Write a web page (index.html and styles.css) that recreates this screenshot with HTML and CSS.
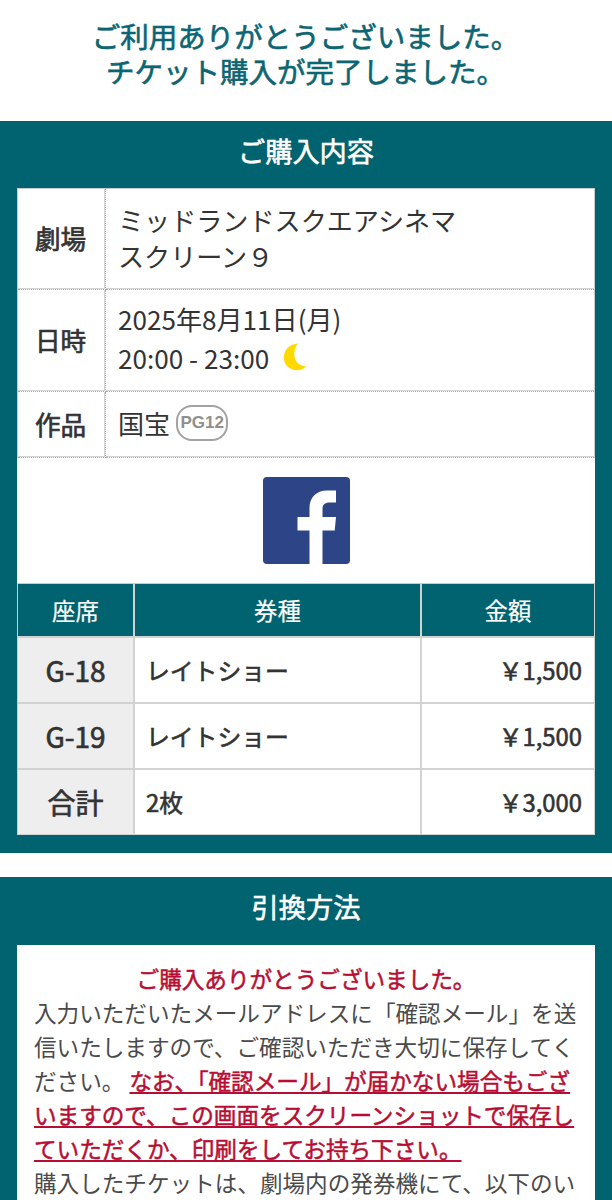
FILE: index.html
```html
<!DOCTYPE html>
<html lang="ja">
<head>
<meta charset="utf-8">
<title>チケット購入完了</title>
<link rel="stylesheet" href="styles.css">
</head>
<body>
<h1 class="thanks">ご利用ありがとうございました。<br>チケット購入が完了しました。</h1>
<section class="panel purchase">
  <h2 class="panel-title">ご購入内容</h2>
  <div class="panel-body">
    <table class="info">
      <tr class="theater"><th>劇場</th><td>ミッドランドスクエアシネマ<br>スクリーン９</td></tr>
      <tr class="date"><th>日時</th><td>2025年8月11日(月)<br>20:00 - 23:00<svg class="moon" viewBox="0 0 24 28"><path d="M15 .5C6.500 1 .8 7 .8 14.300c0 7.500 5.800 12.900 13 12.900 3.700 0 7.200-1.300 9.400-3.700C16 23 11.300 18 11.300 11.500 11.300 7 12.500 3.500 15 .5z"/></svg></td></tr>
      <tr class="title"><th>作品</th><td><div class="movie"><span>国宝</span><span class="rating">PG12</span></div></td></tr>
    </table>
    <div class="share">
      <svg class="facebook" viewBox="0 0 87 87"><rect width="87" height="87" rx="4" fill="#2d4486"/><path d="M46.500 87V53.500H34.500V40h12v-9C46.500 20 53.500 13.500 64 13.500h9v12h-6c-5.500 0-7.500 2-7.500 7V40H73L71.700 53.500h-12.200V87z" fill="#fff"/></svg>
    </div>
    <table class="seats">
      <tr class="head"><th>座席</th><th>券種</th><th>金額</th></tr>
      <tr><th>G-18</th><td>レイトショー</td><td class="price">￥1,500</td></tr>
      <tr><th>G-19</th><td>レイトショー</td><td class="price">￥1,500</td></tr>
      <tr><th>合計</th><td>2枚</td><td class="price">￥3,000</td></tr>
    </table>
  </div>
</section>
<section class="panel exchange">
  <h2 class="panel-title">引換方法</h2>
  <div class="panel-body note">
    <p class="lead">ご購入ありがとうございました。</p>
    <p>入力いただいたメールアドレスに「確認メール」を送<br>信いたしますので、ご確認いただき大切に保存してく<br>ださい。 <strong>なお、「確認メール」が届かない場合もござ<br>いますので、この画面をスクリーンショットで保存し<br>ていただくか、印刷をしてお持ち下さい。</strong><br>購入したチケットは、劇場内の発券機にて、以下のい</p>
  </div>
</section>
</body>
</html>
```
FILE: styles.css
```css
* { box-sizing: border-box; }
html { overflow: hidden; }
body {
  margin: 0;
  height: 1200px;
  overflow: hidden;
  background: #fff;
  color: #333;
  font-family: "Noto Sans CJK JP", sans-serif;
  font-weight: 400;
}
h1, h2, p { margin: 0; }
.thanks {
  height: 121px;
  padding: 18px 1px 0 0;
  color: #0c6572;
  font-size: 28.5px;
  font-weight: 400;
  line-height: 35px;
  text-align: center;
  -webkit-text-stroke: 0.6px;
}
.panel {
  padding: 0 17px 18px;
  background: #00636f;
}
.exchange { margin-top: 24px; }
.panel-title {
  height: 67px;
  color: #fff;
  font-size: 27.2px;
  font-weight: 400;
  line-height: 59px;
  text-align: center;
  -webkit-text-stroke: 0.6px;
}
.exchange .panel-title { height: 68px; }
.panel-body { background: #fff; }
table {
  width: 100%;
  table-layout: fixed;
  border-collapse: separate;
  border-spacing: 0;
}
th { padding: 0; font-weight: 400; -webkit-text-stroke: 0.7px; }
.info { border: 1px solid #c4cdd0; border-bottom: 0; }
.info th, .info td {
  border-bottom: 1px dotted #aaa;
  box-shadow: inset 0 -1px #d4d4d4;
}
.info th {
  width: 88px;
  border-right: 1px dotted #aaa;
  box-shadow: inset -1px -1px #d4d4d4;
  font-size: 25.6px;
}
.info th { padding: 0 2px 3px 0; }
.info td {
  padding: 0 0 3px 12px;
  font-size: 26.1px;
  line-height: 36px;
}
.theater { height: 101px; }
.date { height: 102px; }
.title { height: 66px; }
.info .date td { line-height: 39px; }
.moon {
  width: 24px;
  height: 28px;
  margin-left: 14px;
  vertical-align: -2px;
  fill: #ffd900;
}
.movie { display: flex; align-items: center; gap: 6px; }
.rating {
  width: 52px;
  height: 36px;
  border: 2px solid #a2a2a2;
  border-radius: 16px;
  color: #8f8f8f;
  font: bold 17px/32px "Liberation Sans", sans-serif;
  text-align: center;
}
.share {
  display: flex;
  justify-content: center;
  height: 125px;
  padding-top: 19px;
}
.facebook { width: 87px; height: 87px; }
.seats { border: 1px solid #ccc; border-right: 0; border-bottom: 0; }
.seats th, .seats td {
  border-right: 2px solid #d2d2d2;
  border-bottom: 2px solid #d2d2d2;
}
.seats tr > :last-child { border-right-width: 1px; }
.seats tr:last-child > * { border-bottom-width: 1px; }
.seats tr { height: 66px; }
.seats .head { height: 54px; }
.seats tr:last-child { height: 65px; }
.seats th { width: 117px; background: #eee; font-size: 28px; }
.seats .head th {
  background: #00636f;
  color: #fff;
  font-size: 23.4px;
  padding-bottom: 1px;
  -webkit-text-stroke: 0.2px;
}
.seats .head th:nth-child(2) { width: 287px; }
.seats .head th:nth-child(3) { width: auto; }
.seats td {
  padding: 0 12px 2px 11px;
  font-size: 23.8px;
  -webkit-text-stroke: 0.6px;
}
.seats .price { text-align: right; }
.note {
  padding: 17px 17px 40px;
  color: #4a4a4a;
  font-size: 22.6px;
  line-height: 34px;
  white-space: nowrap;
}
.lead, .note strong {
  color: #b80d32;
  font-weight: 400;
  -webkit-text-stroke: 0.5px;
}
.lead { text-align: center; }
.note strong {
  text-decoration: underline;
  text-decoration-thickness: 1.5px;
  text-underline-offset: 2px;
  text-decoration-skip-ink: none;
}
```
